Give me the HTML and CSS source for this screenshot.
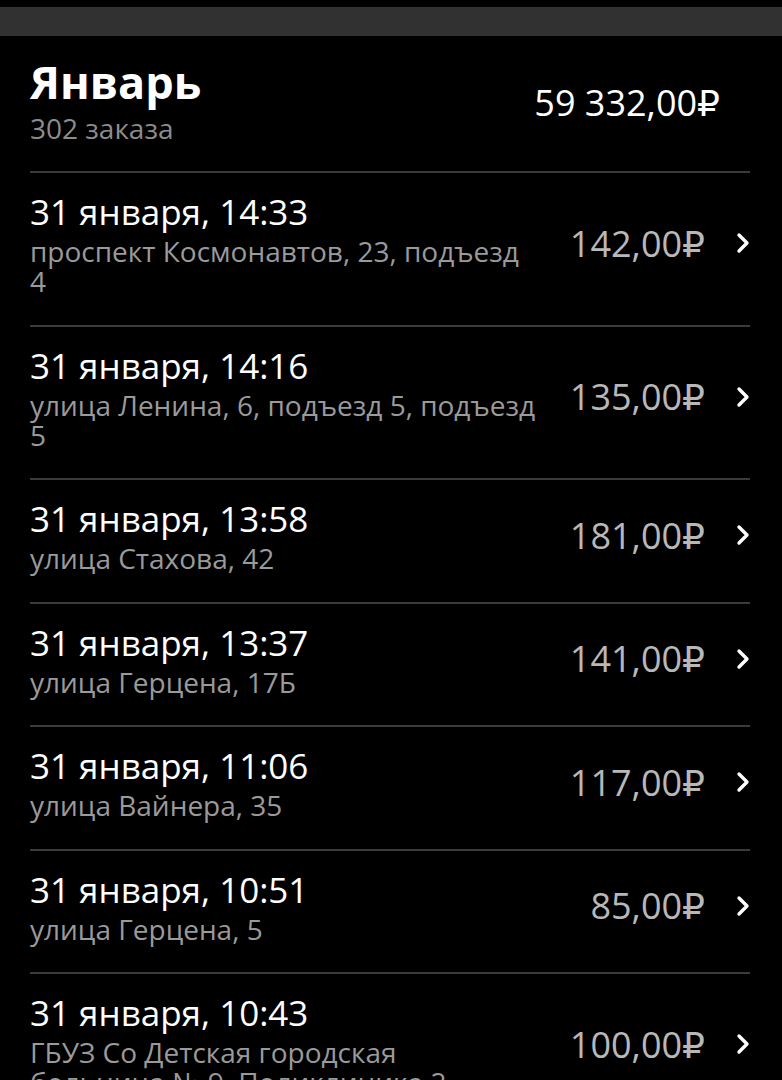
FILE: index.html
```html
<!DOCTYPE html>
<html lang="ru">

<head>
    <meta charset="UTF-8">
    <meta name="viewport" content="width=device-width, initial-scale=1.0">
    <title>Заказы</title>
    <link rel="stylesheet" href="styles.css">
</head>

<body>
    <!-- верхняя полоса -->
    <div class="topbar"></div>

    <div class="page">
        <!-- месяц -->
        <div class="month">
            <div class="month-info">
                <h1 class="month-name">Январь</h1>
                <div class="month-count">302 заказа</div>
            </div>
            <div class="month-total">59 332,00₽</div>
        </div>

        <!-- список заказов -->
        <ul class="orders">
            <li class="order">
                <div class="order-info">
                    <div class="order-date">31 января, 14:33</div>
                    <div class="order-addr">проспект Космонавтов, 23, подъезд 4</div>
                </div>
                <div class="order-price">142,00₽</div>
                <svg class="chevron" viewBox="0 0 14 22"><path d="M3 3l8 8-8 8"/></svg>
            </li>
            <li class="order">
                <div class="order-info">
                    <div class="order-date">31 января, 14:16</div>
                    <div class="order-addr">улица Ленина, 6, подъезд 5, подъезд 5</div>
                </div>
                <div class="order-price">135,00₽</div>
                <svg class="chevron" viewBox="0 0 14 22"><path d="M3 3l8 8-8 8"/></svg>
            </li>
            <li class="order">
                <div class="order-info">
                    <div class="order-date">31 января, 13:58</div>
                    <div class="order-addr">улица Стахова, 42</div>
                </div>
                <div class="order-price">181,00₽</div>
                <svg class="chevron" viewBox="0 0 14 22"><path d="M3 3l8 8-8 8"/></svg>
            </li>
            <li class="order">
                <div class="order-info">
                    <div class="order-date">31 января, 13:37</div>
                    <div class="order-addr">улица Герцена, 17Б</div>
                </div>
                <div class="order-price">141,00₽</div>
                <svg class="chevron" viewBox="0 0 14 22"><path d="M3 3l8 8-8 8"/></svg>
            </li>
            <li class="order">
                <div class="order-info">
                    <div class="order-date">31 января, 11:06</div>
                    <div class="order-addr">улица Вайнера, 35</div>
                </div>
                <div class="order-price">117,00₽</div>
                <svg class="chevron" viewBox="0 0 14 22"><path d="M3 3l8 8-8 8"/></svg>
            </li>
            <li class="order">
                <div class="order-info">
                    <div class="order-date">31 января, 10:51</div>
                    <div class="order-addr">улица Герцена, 5</div>
                </div>
                <div class="order-price">85,00₽</div>
                <svg class="chevron" viewBox="0 0 14 22"><path d="M3 3l8 8-8 8"/></svg>
            </li>
            <li class="order">
                <div class="order-info">
                    <div class="order-date">31 января, 10:43</div>
                    <div class="order-addr">ГБУЗ Со Детская городская больница № 9, Поликлиника 2</div>
                </div>
                <div class="order-price">100,00₽</div>
                <svg class="chevron" viewBox="0 0 14 22"><path d="M3 3l8 8-8 8"/></svg>
            </li>
        </ul>
    </div>
</body>

</html>
```

FILE: styles.css
```css
* {
    margin: 0;
    padding: 0;
    list-style: none;
    box-sizing: border-box;
}

body {
    background-color: #000;
    color: #fff;
    font-family: "Open Sans", "DejaVu Sans", sans-serif;
}

.topbar {
    margin-top: 7px;
    height: 29px;
    background-color: #313131;
}

.page {
    padding: 0 32px 0 30px;
}

/* шапка месяца */
.month {
    display: flex;
    justify-content: space-between;
    align-items: flex-start;
    padding: 21px 0 27px;
    border-bottom: 2px solid #3a3a3a;
}

.month-name {
    font-size: 45px;
    line-height: 50px;
    font-weight: 700;
}

.month-count {
    margin-top: 5px;
    font-size: 28px;
    line-height: 32px;
    color: #8c8c8c;
}

.month-total {
    margin: 24px 30px 0 0;
    font-size: 36px;
    line-height: 44px;
    font-weight: 500;
}

/* строки заказов */
.order {
    display: flex;
    align-items: center;
    padding: 17px 0 28.5px;
    border-bottom: 2px solid #3a3a3a;
}

.order-info {
    flex: 1;
    min-width: 0;
}

.order-date {
    font-size: 35px;
    line-height: 44px;
}

.order-addr {
    margin-top: 2px;
    max-width: 508px;
    font-size: 28px;
    line-height: 30px;
    color: #9a9a9a;
}

.order-price {
    margin-left: 20px;
    font-size: 36px;
    color: #b8b8b8;
    white-space: nowrap;
}

.chevron {
    width: 14px;
    height: 22px;
    margin-left: 31px;
    flex-shrink: 0;
}

.chevron path {
    fill: none;
    stroke: #fff;
    stroke-width: 3.4;
    stroke-linecap: round;
    stroke-linejoin: round;
}
```
